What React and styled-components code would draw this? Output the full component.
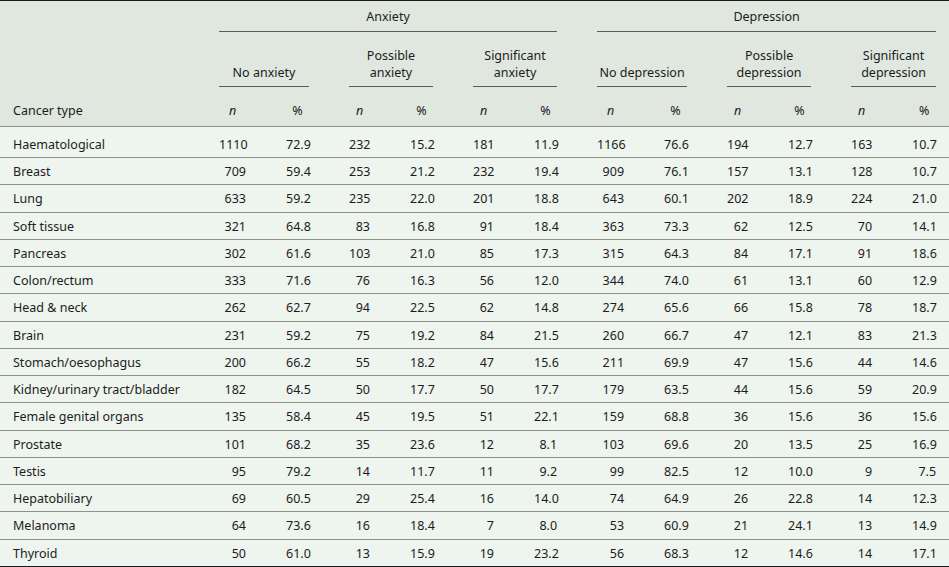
import React from "react";
import styled, { createGlobalStyle } from "styled-components";

const GlobalStyle = createGlobalStyle`
  html, body {
    margin: 0;
    padding: 0;
    background: #eef4ee;
  }
  body {
    font-family: "Noto Sans", "Open Sans", sans-serif;
    color: #1c1c1c;
  }
`;

const Table = styled.table`
  width: 949px;
  table-layout: fixed;
  border-collapse: separate;
  border-spacing: 0;
  border-top: 1px solid #1a1a1a;
  font-size: 12.5px;
  line-height: 17px;
`;

const Head = styled.thead`
  background: #dfe7df;
`;

const Body = styled.tbody`
  background: #eef4ee;
`;

const GroupCell = styled.th`
  font-weight: normal;
  text-align: center;
  vertical-align: bottom;
  padding: ${(p) => (p.$top ? "7px" : "15px")} ${(p) => (p.$last ? "13px" : "20px")} 0 20px;
`;

const Underlined = styled.div`
  border-bottom: 1px solid #5a5a5a;
  padding-bottom: ${(p) => (p.$top ? "6px" : "5px")};
`;

const LabelCell = styled.th`
  font-weight: normal;
  text-align: left;
  vertical-align: bottom;
  padding: 0 20px 7px 13px;
  border-bottom: 1px solid #8d928d;
`;

const StatHead = styled.th`
  font-weight: normal;
  font-style: ${(p) => (p.$italic ? "italic" : "normal")};
  text-align: center;
  vertical-align: bottom;
  padding: 15px ${(p) => (p.$last ? "13px" : "20px")} 7px 20px;
  border-bottom: 1px solid #8d928d;
`;

const Cell = styled.td`
  text-align: ${(p) => (p.$left ? "left" : "right")};
  padding: ${(p) => (p.$first ? "9px" : "5px")} ${(p) => (p.$last ? "13px" : "20px")}
    ${(p) => (p.$first ? "4px" : "4.2667px")} ${(p) => (p.$left ? "13px" : "20px")};
  border-bottom: 1px solid ${(p) => (p.$end ? "#1a1a1a" : "#8d928d")};
  white-space: nowrap;
`;

const widths = [199, 67, 63, 61, 63, 61, 63, 67, 63, 61, 63, 61, 57];

const rows = [
  ["Haematological", 1110, "72.9", 232, "15.2", 181, "11.9", 1166, "76.6", 194, "12.7", 163, "10.7"],
  ["Breast", 709, "59.4", 253, "21.2", 232, "19.4", 909, "76.1", 157, "13.1", 128, "10.7"],
  ["Lung", 633, "59.2", 235, "22.0", 201, "18.8", 643, "60.1", 202, "18.9", 224, "21.0"],
  ["Soft tissue", 321, "64.8", 83, "16.8", 91, "18.4", 363, "73.3", 62, "12.5", 70, "14.1"],
  ["Pancreas", 302, "61.6", 103, "21.0", 85, "17.3", 315, "64.3", 84, "17.1", 91, "18.6"],
  ["Colon/rectum", 333, "71.6", 76, "16.3", 56, "12.0", 344, "74.0", 61, "13.1", 60, "12.9"],
  ["Head & neck", 262, "62.7", 94, "22.5", 62, "14.8", 274, "65.6", 66, "15.8", 78, "18.7"],
  ["Brain", 231, "59.2", 75, "19.2", 84, "21.5", 260, "66.7", 47, "12.1", 83, "21.3"],
  ["Stomach/oesophagus", 200, "66.2", 55, "18.2", 47, "15.6", 211, "69.9", 47, "15.6", 44, "14.6"],
  ["Kidney/urinary tract/bladder", 182, "64.5", 50, "17.7", 50, "17.7", 179, "63.5", 44, "15.6", 59, "20.9"],
  ["Female genital organs", 135, "58.4", 45, "19.5", 51, "22.1", 159, "68.8", 36, "15.6", 36, "15.6"],
  ["Prostate", 101, "68.2", 35, "23.6", 12, "8.1", 103, "69.6", 20, "13.5", 25, "16.9"],
  ["Testis", 95, "79.2", 14, "11.7", 11, "9.2", 99, "82.5", 12, "10.0", 9, "7.5"],
  ["Hepatobiliary", 69, "60.5", 29, "25.4", 16, "14.0", 74, "64.9", 26, "22.8", 14, "12.3"],
  ["Melanoma", 64, "73.6", 16, "18.4", 7, "8.0", 53, "60.9", 21, "24.1", 13, "14.9"],
  ["Thyroid", 50, "61.0", 13, "15.9", 19, "23.2", 56, "68.3", 12, "14.6", 14, "17.1"],
];

const subGroups = [
  ["No anxiety"],
  ["Possible", "anxiety"],
  ["Significant", "anxiety"],
  ["No depression"],
  ["Possible", "depression"],
  ["Significant", "depression"],
];

export default function App() {
  return (
    <>
      <GlobalStyle />
      <Table>
        <colgroup>
          {widths.map((w, i) => (
            <col key={i} style={{ width: w }} />
          ))}
        </colgroup>
        <Head>
          <tr>
            <LabelCell rowSpan={3}>Cancer type</LabelCell>
            <GroupCell colSpan={6} $top>
              <Underlined $top>Anxiety</Underlined>
            </GroupCell>
            <GroupCell colSpan={6} $top $last>
              <Underlined $top>Depression</Underlined>
            </GroupCell>
          </tr>
          <tr>
            {subGroups.map((lines, i) => (
              <GroupCell key={i} colSpan={2} $last={i === 5}>
                <Underlined>
                  {lines.map((l, j) => (
                    <React.Fragment key={j}>
                      {j > 0 && <br />}
                      {l}
                    </React.Fragment>
                  ))}
                </Underlined>
              </GroupCell>
            ))}
          </tr>
          <tr>
            {subGroups.map((_, i) => (
              <React.Fragment key={i}>
                <StatHead $italic>n</StatHead>
                <StatHead $last={i === 5}>%</StatHead>
              </React.Fragment>
            ))}
          </tr>
        </Head>
        <Body>
          {rows.map((r, ri) => (
            <tr key={r[0]}>
              {r.map((v, ci) => (
                <Cell
                  key={ci}
                  $left={ci === 0}
                  $last={ci === r.length - 1}
                  $first={ri === 0}
                  $end={ri === rows.length - 1}
                >
                  {v}
                </Cell>
              ))}
            </tr>
          ))}
        </Body>
      </Table>
    </>
  );
}
